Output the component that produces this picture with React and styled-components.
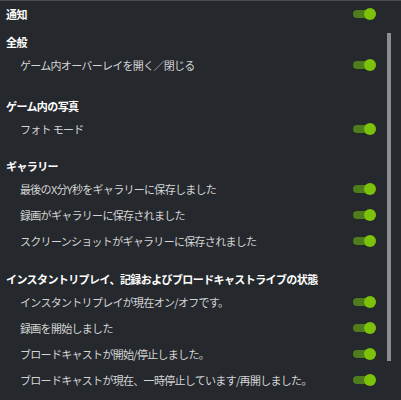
import styled, { createGlobalStyle } from 'styled-components';

const GlobalStyle = createGlobalStyle`
    html, body {
        margin: 0;
        padding: 0;
        background: #25282c;
    }
    body {
        font-family: 'Noto Sans CJK JP', 'Noto Sans', sans-serif;
    }
`;

const Panel = styled.div`
    width: 401px;
    height: 400px;
    background: #25282c;
    border-top: 1px solid #4a4d52;
    box-sizing: border-box;
    overflow: hidden;
    display: flex;
    flex-direction: column;
`;

const TopRow = styled.div`
    height: 25px;
    display: flex;
    align-items: center;
    justify-content: space-between;
    padding: 0 25px 0 0;
    flex-shrink: 0;
`;

const Body = styled.div`
    flex: 1;
    display: flex;
    min-height: 0;
`;

const List = styled.div`
    flex: 1;
    display: flex;
    flex-direction: column;
`;

const Scroll = styled.div`
    width: 14px;
    padding: 7px 0 0;
    display: flex;
    flex-direction: column;
`;

const Thumb = styled.div`
    width: 4px;
    height: 328px;
    background: #8a8d91;
`;

const Section = styled.div`
    margin-top: ${({ spacing }) => spacing}px;
    display: flex;
    flex-direction: column;
`;

const Heading = styled.div`
    height: 20px;
    display: flex;
    align-items: center;
    padding-left: 6px;
    font-size: 11px;
    font-weight: 700;
    color: #ffffff;
    letter-spacing: -0.6px;
`;

const Row = styled.div`
    height: 26px;
    display: flex;
    align-items: center;
    justify-content: space-between;
    padding: 0 11px 0 20px;
`;

const Label = styled.span`
    font-size: 11px;
    color: #d4d5d6;
    letter-spacing: -0.7px;
`;

const Track = styled.div`
    position: relative;
    width: 23px;
    height: 12px;
    &:before {
        content: '';
        position: absolute;
        left: 0;
        top: 2px;
        width: 17px;
        height: 8px;
        border-radius: 4px;
        background: #4f7c1c;
    }
    &:after {
        content: '';
        position: absolute;
        right: 0;
        top: 0;
        width: 12px;
        height: 12px;
        border-radius: 50%;
        background: #7cc10a;
    }
`;

const sections = [
    { title: '全般', spacing: 6, items: ['ゲーム内オーバーレイを開く／閉じる'] },
    { title: 'ゲーム内の写真', spacing: 18, items: ['フォト モード'] },
    {
        title: 'ギャラリー',
        spacing: 14,
        items: [
            '最後のX分Y秒をギャラリーに保存しました',
            '録画がギャラリーに保存されました',
            'スクリーンショットがギャラリーに保存されました',
        ],
    },
    {
        title: 'インスタントリプレイ、記録およびブロードキャストライブの状態',
        spacing: 15,
        items: [
            'インスタントリプレイが現在オン/オフです。',
            '録画を開始しました',
            'ブロードキャストが開始/停止しました。',
            'ブロードキャストが現在、一時停止しています/再開しました。',
        ],
    },
];

const App = () => {
    return (
        <Panel>
            <GlobalStyle />
            <TopRow>
                <Heading>通知</Heading>
                <Track />
            </TopRow>
            <Body>
                <List>
                    {sections.map((s) => (
                        <Section key={s.title} spacing={s.spacing}>
                            <Heading>{s.title}</Heading>
                            {s.items.map((item) => (
                                <Row key={item}>
                                    <Label>{item}</Label>
                                    <Track />
                                </Row>
                            ))}
                        </Section>
                    ))}
                </List>
                <Scroll>
                    <Thumb />
                </Scroll>
            </Body>
        </Panel>
    );
};

export default App;
